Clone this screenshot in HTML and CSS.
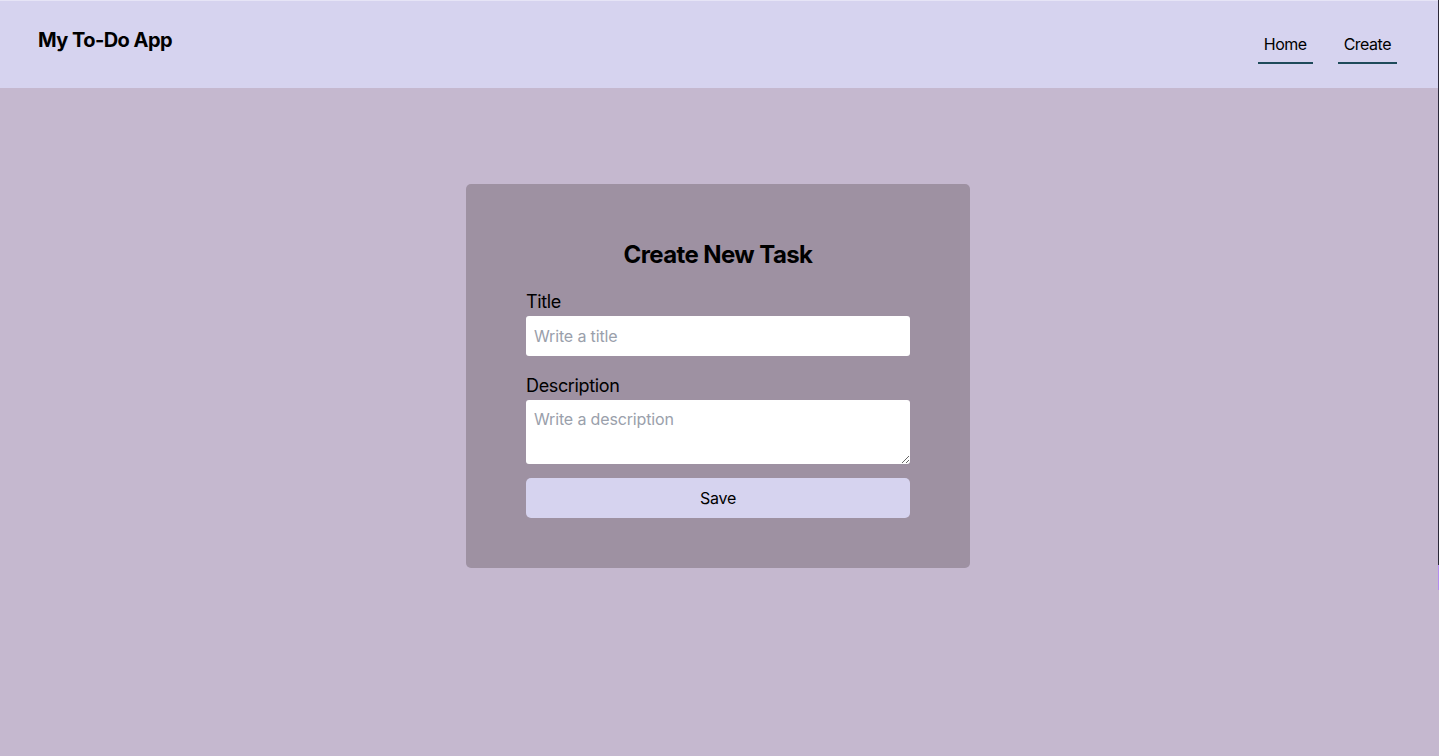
FILE: index.html
```html
<!DOCTYPE html>
<html lang="en">
<head>
<meta charset="utf-8">
<title>My To-Do App</title>
<link rel="stylesheet" href="styles.css">
</head>
<body>
<header class="topbar">
  <div class="brand">My To-Do App</div>
  <nav class="nav">
    <a class="nav-link" href="#">Home</a>
    <a class="nav-link" href="#">Create</a>
  </nav>
</header>
<main class="main">
  <form class="card">
    <h1 class="card-title">Create New Task</h1>
    <label class="label" for="title">Title</label>
    <input class="field" id="title" type="text" placeholder="Write a title">
    <label class="label label-gap" for="desc">Description</label>
    <textarea class="field area" id="desc" placeholder="Write a description"></textarea>
    <button class="save" type="button">Save</button>
  </form>
</main>
<div class="edge"></div>
</body>
</html>
```
FILE: styles.css
```css
* { box-sizing: border-box; }
html, body { margin: 0; padding: 0; height: 100%; }
body {
  font-family: Inter, "Noto Sans", sans-serif;
  background: #c5b8cf;
  color: #000;
  overflow: hidden;
}
.topbar {
  height: 88px;
  background: #d6d3ef;
  border-top: 1px solid #e6e4f6;
  display: flex;
  justify-content: space-between;
  align-items: flex-start;
  padding: 0 42px 0 38px;
}
.brand {
  font-size: 20px;
  font-weight: 700;
  line-height: 28px;
  letter-spacing: -0.55px;
  margin-top: 25px;
}
.nav {
  display: flex;
  gap: 25px;
  margin-top: 31px;
}
.nav-link {
  color: #000;
  text-decoration: none;
  font-size: 16px;
  line-height: 24px;
  letter-spacing: -0.5px;
  padding: 0 6px 6px;
  border-bottom: 2px solid #1e4a5a;
}
.main {
  display: flex;
  justify-content: center;
  padding-top: 96px;
  padding-right: 3px;
}
.card {
  width: 504px;
  height: 384px;
  background: #9e91a2;
  border-radius: 5px;
  padding: 55px 60px 0;
  display: flex;
  flex-direction: column;
}
.card-title {
  margin: 0 0 17px;
  font-size: 24px;
  line-height: 32px;
  font-weight: 700;
  letter-spacing: -0.6px;
  text-align: center;
}
.label {
  font-size: 18px;
  line-height: 26px;
  letter-spacing: -0.35px;
  margin-top: 1px;
  margin-bottom: 1px;
}
.label-gap { margin-top: 17px; }
.field {
  width: 100%;
  height: 40px;
  border: none;
  border-radius: 3px;
  background: #fff;
  font-family: inherit;
  font-size: 16px;
  letter-spacing: -0.15px;
  padding: 0 8px;
  color: #000;
  outline: none;
}
.field::placeholder { color: #9aa0ab; }
.area {
  height: 64px;
  padding: 7px 8px;
  line-height: 24px;
  resize: vertical;
  display: block;
}
.save {
  margin-top: 14px;
  height: 40px;
  border: none;
  border-radius: 5px;
  background: #d6d3ef;
  font-family: inherit;
  font-size: 16px;
  letter-spacing: -0.2px;
  color: #000;
}
.edge {
  position: fixed;
  top: 0;
  right: 0;
  width: 1px;
  height: 565px;
  background: #2a2838;
}
.edge::after {
  content: "";
  position: absolute;
  top: 565px;
  left: 0;
  width: 1px;
  height: 25px;
  background: #b48cf0;
}
```
